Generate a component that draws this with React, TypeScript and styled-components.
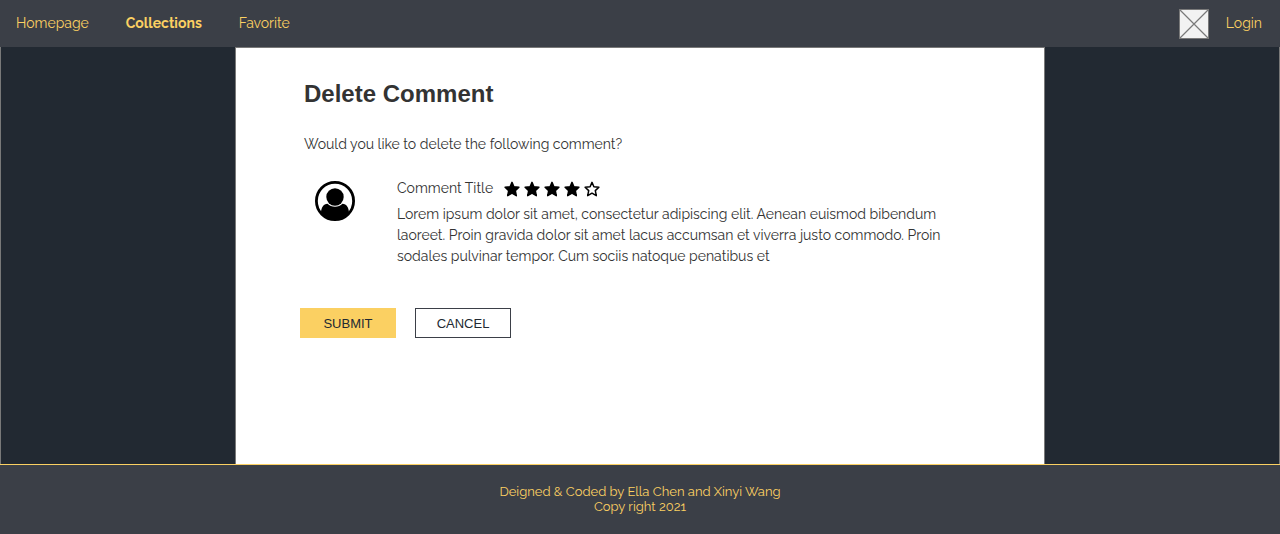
import React from "react";
import styled, { createGlobalStyle } from "styled-components";

const color = {
  bar: "#3b3f47",
  night: "#222932",
  gold: "#fbd062",
  line: "#797979",
  text: "#333333",
};

const GlobalStyle = createGlobalStyle`
  *, *::before, *::after { box-sizing: border-box; }
  body {
    margin: 0;
    background: ${color.night};
    color: ${color.text};
    font-family: Raleway, Lato, sans-serif;
    font-size: 14px;
    line-height: 21px;
  }
  h1, h2, p { margin: 0; }
`;

const Page = styled.div`
  display: flex;
  flex-direction: column;
  min-height: 100vh;
`;

const Header = styled.header`
  display: flex;
  align-items: center;
  justify-content: space-between;
  height: 47px;
  padding: 0 18px 0 16px;
  background: ${color.bar};
`;

const Nav = styled.nav`
  display: flex;
  gap: 37px;
`;

const NavLink = styled.a<{ $active?: boolean }>`
  color: ${color.gold};
  font-weight: ${(p) => (p.$active ? 700 : 400)};
  text-decoration: none;
`;

const Account = styled.div`
  display: flex;
  align-items: center;
  gap: 17px;
`;

const Placeholder = styled.svg`
  display: block;
  width: 30px;
  height: 30px;
`;

const Main = styled.main`
  display: flex;
  flex: 1;
  justify-content: center;
  border: solid ${color.line};
  border-width: 0 1px;
`;

const Sheet = styled.section`
  width: 100%;
  max-width: 810px;
  padding: 32px 64px;
  background: #ffffff;
  border: 1px solid ${color.line};
  border-bottom: 0;
`;

const Title = styled.h1`
  padding-left: 4px;
  font-family: "Liberation Sans", Arial, sans-serif;
  font-size: 24px;
  line-height: 28px;
`;

const Question = styled.p`
  margin-top: 26px;
  padding-left: 4px;
`;

const Comment = styled.article`
  display: flex;
  gap: 42px;
  margin-top: 23px;
  padding: 0 30px 0 15px;
`;

const Avatar = styled.svg`
  flex: none;
  width: 40px;
  height: 40px;
  margin-top: 3px;
`;

const CommentHead = styled.div`
  display: flex;
  align-items: center;
  gap: 11px;
  margin-bottom: 5px;
`;

const CommentTitle = styled.h2`
  font-size: 14px;
  font-weight: 400;
`;

const Rating = styled.div`
  display: flex;
  gap: 4px;
`;

const StarIcon = styled.svg`
  width: 16px;
  height: 16px;
`;

const Actions = styled.form`
  display: flex;
  gap: 19px;
  margin-top: 41px;
`;

const Button = styled.button<{ $primary?: boolean }>`
  width: 96px;
  height: 30px;
  padding: 0;
  border: 1px solid ${(p) => (p.$primary ? color.gold : color.bar)};
  background: ${(p) => (p.$primary ? color.gold : "#ffffff")};
  color: ${color.night};
  font-family: "Liberation Sans", Arial, sans-serif;
  font-size: 13px;
  cursor: pointer;
`;

const Footer = styled.footer`
  height: 70px;
  padding-top: 19px;
  border-top: 1px solid ${color.gold};
  background: ${color.bar};
  color: ${color.gold};
  font-size: 13px;
  line-height: 15px;
  text-align: center;
`;

function Star({ filled }: { filled: boolean }) {
  return (
    <StarIcon viewBox="0 0 16 16" aria-hidden="true">
      <path
        d="M8 1.4L9.900 5.700L14.900 6.200L11.300 9.600L12.300 14.700L8 12.200L3.700 14.700L4.700 9.600L1.100 6.200L6.100 5.700Z"
        fill={filled ? "#000" : "none"}
        stroke="#000"
        strokeWidth="1.5"
        strokeLinejoin="round"
      />
    </StarIcon>
  );
}

export default function App() {
  return (
    <Page>
      <GlobalStyle />
      <Header>
        <Nav>
          <NavLink href="#home">Homepage</NavLink>
          <NavLink href="#collections" $active>Collections</NavLink>
          <NavLink href="#favorite">Favorite</NavLink>
        </Nav>
        <Account>
          <Placeholder viewBox="0 0 30 30" aria-hidden="true">
            <rect x="0.5" y="0.5" width="29" height="29" fill="#f2f2f2" stroke="#797979" />
            <path d="M0.5 0.5l29 29M29.5 0.5l-29 29" stroke="#797979" strokeWidth="1.2" />
          </Placeholder>
          <NavLink href="#login">Login</NavLink>
        </Account>
      </Header>
      <Main>
        <Sheet>
          <Title>Delete Comment</Title>
          <Question>Would you like to delete the following comment?</Question>
          <Comment>
            <Avatar viewBox="0 0 40 40" aria-hidden="true">
              <circle cx="20" cy="20" r="18.6" fill="#fff" stroke="#000" strokeWidth="2.8" />
              <circle cx="20" cy="16" r="8.7" />
              <path d="M6 32C6 27 8.500 22.800 12.500 22.800c2 1.900 4.500 3 7.500 3s5.500-1.100 7.500-3C31.500 22.800 34 27 34 32C31 36.500 26 39 20 39S9 36.500 6 32z" />
            </Avatar>
            <div>
              <CommentHead>
                <CommentTitle>Comment Title</CommentTitle>
                <Rating role="img" aria-label="4 out of 5 stars">
                  {[1, 2, 3, 4, 5].map((n) => (
                    <Star key={n} filled={n <= 4} />
                  ))}
                </Rating>
              </CommentHead>
              <p>
                Lorem ipsum dolor sit amet, consectetur adipiscing elit. Aenean euismod bibendum
                laoreet. Proin gravida dolor sit amet lacus accumsan et viverra justo commodo. Proin
                sodales pulvinar tempor. Cum sociis natoque penatibus et
              </p>
            </div>
          </Comment>
          <Actions onSubmit={(e) => e.preventDefault()}>
            <Button type="submit" $primary>SUBMIT</Button>
            <Button type="button">CANCEL</Button>
          </Actions>
        </Sheet>
      </Main>
      <Footer>
        <p>Deigned &amp; Coded by Ella Chen and Xinyi Wang</p>
        <p>Copy right 2021</p>
      </Footer>
    </Page>
  );
}
